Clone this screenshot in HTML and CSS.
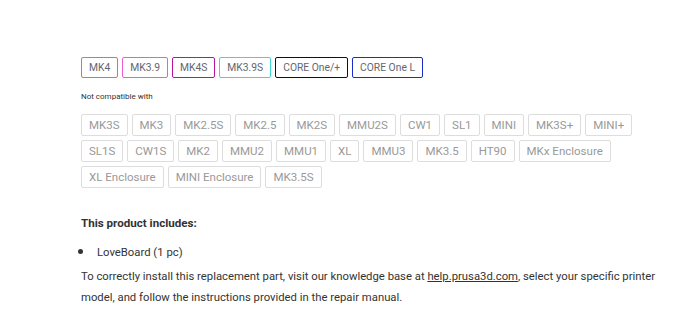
FILE: index.html
```html
<!DOCTYPE html>
<html>
<head>
  <title>LoveBoard</title>
  <link rel="stylesheet" href="styles.css">
</head>

<body>
  <main class="product">
    <div class="compat">
      <span class="tag mk4">MK4</span>
      <span class="tag mk39">MK3.9</span>
      <span class="tag mk4s">MK4S</span>
      <span class="tag mk39s">MK3.9S</span>
      <span class="tag core">CORE One/+</span>
      <span class="tag core-l">CORE One L</span>
    </div>

    <p class="compat-label">Not compatible with</p>

    <div class="incompat">
      <span class="chip">MK3S</span>
      <span class="chip">MK3</span>
      <span class="chip">MK2.5S</span>
      <span class="chip">MK2.5</span>
      <span class="chip">MK2S</span>
      <span class="chip">MMU2S</span>
      <span class="chip">CW1</span>
      <span class="chip">SL1</span>
      <span class="chip">MINI</span>
      <span class="chip">MK3S+</span>
      <span class="chip">MINI+</span>
      <span class="chip">SL1S</span>
      <span class="chip">CW1S</span>
      <span class="chip">MK2</span>
      <span class="chip">MMU2</span>
      <span class="chip">MMU1</span>
      <span class="chip">XL</span>
      <span class="chip">MMU3</span>
      <span class="chip">MK3.5</span>
      <span class="chip">HT90</span>
      <span class="chip">MKx Enclosure</span>
      <span class="chip">XL Enclosure</span>
      <span class="chip">MINI Enclosure</span>
      <span class="chip">MK3.5S</span>
    </div>

    <div class="description">
      <h4>This product includes:</h4>
      <ul>
        <li>LoveBoard (1 pc)</li>
      </ul>
      <p>To correctly install this replacement part, visit our knowledge base at <a href="#">help.prusa3d.com</a>, select your specific printer model, and follow the instructions provided in the repair manual.</p>
    </div>
  </main>
</body>
</html>
```

FILE: styles.css
```css
body {
  font-family: Roboto, 'Liberation Sans', sans-serif;
  margin: 0;
  background-color: #FFFFFF;
  color: #333333;
}

.product {
  padding: 57px 0 0 81px;
  width: 580px;
}

.compat {
  display: flex;
  flex-wrap: wrap;
  gap: 4px;
}

.tag {
  font-size: 10.3px;
  line-height: 19px;
  padding: 0 7px;
  color: #63656F;
  border: 1px solid #999999;
  border-radius: 2px;
}

.tag.mk4 { border-color: #E07B2A; }
.tag.mk39 { border-color: #E85CD8; }
.tag.mk4s { border-color: #B8139E; }
.tag.mk39s { border-color: #3FD6D6; }
.tag.core { border-color: #111111; }
.tag.core-l { border-color: #1B2FC7; }

.compat-label {
  font-size: 8px;
  margin: 14px 0 13px;
  color: #333333;
}

.incompat {
  display: flex;
  flex-wrap: wrap;
  gap: 4px;
}

.chip {
  font-size: 11.5px;
  line-height: 20px;
  padding: 0 7px;
  color: #999999;
  border: 1px solid #DDDDDD;
  border-radius: 2px;
}

.description {
  margin-top: 25px;
  font-size: 11.3px;
  line-height: 21px;
}

.description h4 {
  font-size: 11.6px;
  margin: 0 0 7px;
}

.description ul {
  margin: 0 0 3px;
  padding-left: 13px;
}

.description li {
  padding-left: 3px;
}

.description li::marker {
  font-size: 15px;
}

.description p {
  margin: 0;
}

.description a {
  color: #333333;
}
```
